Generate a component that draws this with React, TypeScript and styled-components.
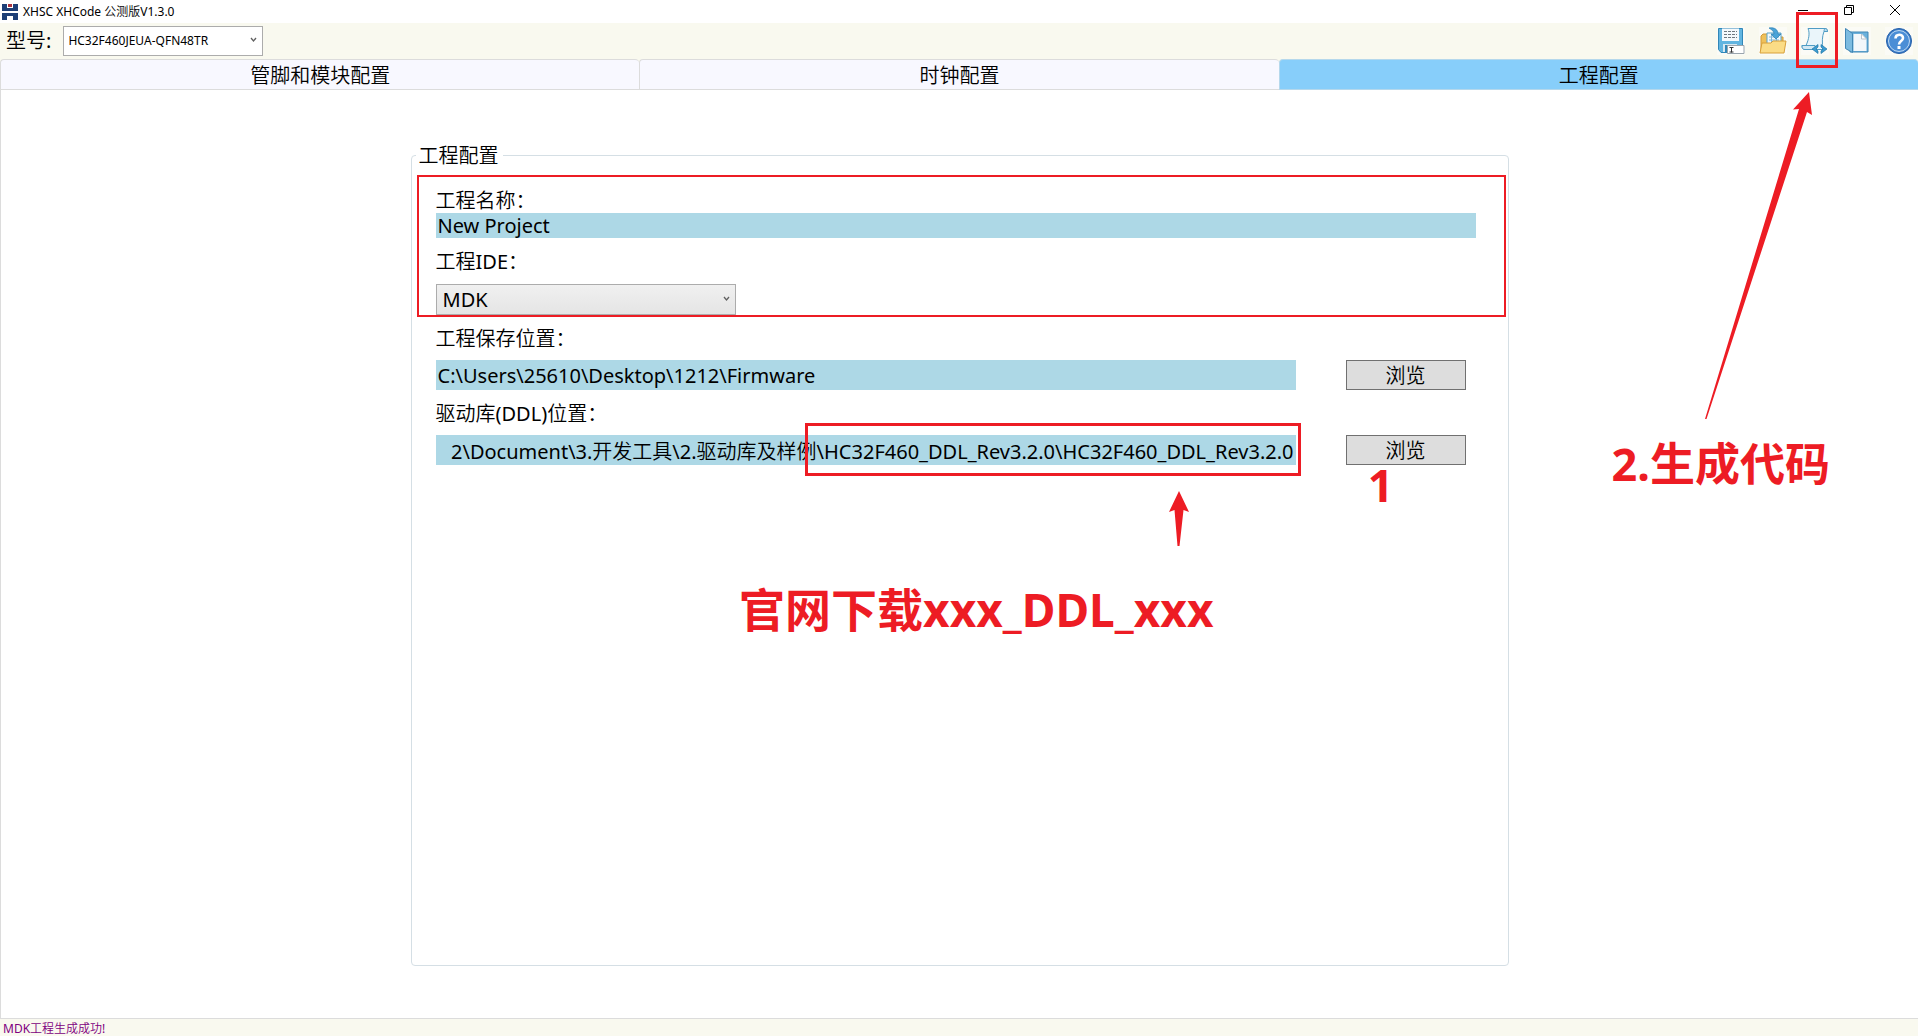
import React, { useEffect, useRef } from "react";
import styled, { createGlobalStyle } from "styled-components";

const RED = "#ed1c24";

const GlobalStyle = createGlobalStyle`
  * { box-sizing: border-box; }
  body {
    margin: 0;
    background: #fff;
    color: #000;
    font-family: "Noto Sans", "Noto Sans CJK SC DemiLight", "Noto Sans CJK SC", sans-serif;
    font-size: 20px;
  }
  button, input, select { font: inherit; color: inherit; margin: 0; }
`;

const Page = styled.div`
  position: relative;
  display: flex;
  flex-direction: column;
  min-height: 100vh;
  overflow: hidden;
`;

const TitleBar = styled.header`
  display: flex;
  align-items: center;
  justify-content: space-between;
  height: 23px;
  padding: 0 18px 3px 2px;
`;

const AppTitle = styled.h1`
  display: flex;
  align-items: center;
  gap: 5px;
  margin: 0;
  padding-top: 3px;
  font-size: 12px;
  font-weight: 400;
  line-height: 20px;
`;

const WindowControls = styled.div`
  display: flex;
  gap: 36px;
`;

const PlainButton = styled.button`
  display: flex;
  padding: 0;
  border: 0;
  background: none;
`;

const Toolbar = styled.div`
  display: flex;
  align-items: center;
  justify-content: space-between;
  height: 36px;
  padding: 0 5px 0 6px;
  background: #f9f9ef;
`;

const ModelField = styled.label`
  display: flex;
  align-items: center;
  gap: 12px;
  line-height: 28px;
`;

const Combo = styled.span<{ $width: number }>`
  position: relative;
  display: block;
  width: ${(p) => p.$width}px;
`;

const ComboSelect = styled.select<{ $plain?: boolean }>`
  display: block;
  appearance: none;
  width: 100%;
  height: ${(p) => (p.$plain ? 30 : 31)}px;
  padding: 0 20px 0 ${(p) => (p.$plain ? 4 : 6)}px;
  border: 1px solid #acacac;
  border-radius: 0;
  background: ${(p) => (p.$plain ? "#fff" : "linear-gradient(#f0f0f0, #e5e5e5)")};
  font-size: ${(p) => (p.$plain ? 12 : 20)}px;
`;

const ComboArrow = styled.svg`
  position: absolute;
  top: 50%;
  right: 6px;
  margin-top: -4px;
  pointer-events: none;
`;

const ToolButtons = styled.div`
  display: flex;
  gap: 14px;
`;

const ToolButton = styled(PlainButton)`
  position: relative;
  background: #fbfbf6;
`;

const ToolHighlight = styled.span`
  position: absolute;
  inset: -15px -9px -13px -5px;
  border: 3px solid ${RED};
  pointer-events: none;
`;

const Tabs = styled.nav`
  display: grid;
  grid-template-columns: repeat(3, 1fr);
  background: #f9f9ef;
`;

const Tab = styled.button<{ $active?: boolean }>`
  height: 31px;
  padding: 2px 0 0;
  border: 1px solid ${(p) => (p.$active ? "#b5d8ec" : "#dcdcdc")};
  border-right-width: 0;
  border-radius: 4px 4px 0 0;
  background: ${(p) => (p.$active ? "#87cefa" : "#f8f8ff")};
  line-height: 26px;
`;

const Workspace = styled.main`
  flex: 1;
  padding: 51px 20px 52px;
  border-left: 1px solid #dcdcdc;
  display: flex;
  justify-content: center;
`;

const Group = styled.fieldset`
  position: relative;
  width: 100%;
  max-width: 1098px;
  min-width: 0;
  margin: 0;
  padding: 20px 32px 0 24px;
  border: 1px solid #d5dfe5;
  border-radius: 4px;
`;

const GroupTitle = styled.legend`
  margin-left: -20px;
  padding: 2px 4px 0 3px;
  line-height: 26px;
`;

const FieldLabel = styled.label`
  display: block;
  line-height: 24px;
`;

const Field = styled.div<{ $gap: number; $top?: number }>`
  display: grid;
  gap: ${(p) => p.$gap}px;
  margin-top: ${(p) => p.$top ?? 0}px;
`;

const PathRow = styled.div`
  display: flex;
  gap: 50px;
  padding-right: 10px;
`;

const TextBox = styled.input<{ $height: number }>`
  flex: 1;
  min-width: 0;
  width: 100%;
  height: ${(p) => p.$height}px;
  padding: 0 2px;
  border: 0;
  border-radius: 0;
  background: #add8e6;
`;

const EndTextBox = styled(TextBox)`
  text-align: right;
`;

const BrowseButton = styled.button`
  width: 120px;
  height: 30px;
  padding: 2px 0 0;
  border: 1px solid #707070;
  background: #ddd;
  line-height: 26px;
`;

const PathCell = styled.div`
  position: relative;
  display: flex;
  flex: 1;
  min-width: 0;
`;

const ProjectHighlight = styled.div`
  position: absolute;
  top: 6px;
  left: 5px;
  right: 2px;
  height: 142px;
  border: 2px solid ${RED};
  pointer-events: none;
`;

const LibraryHighlight = styled.div`
  position: absolute;
  top: -12px;
  right: -5px;
  width: 496px;
  height: 53px;
  border: 3px solid ${RED};
  pointer-events: none;
`;

const Note = styled.p<{ $top: number; $right: number; $size?: number }>`
  position: absolute;
  top: ${(p) => p.$top}px;
  right: ${(p) => p.$right}px;
  margin: 0;
  color: ${RED};
  font-family: "Noto Sans", "Noto Sans CJK SC", sans-serif;
  font-size: ${(p) => p.$size ?? 45}px;
  font-weight: 700;
  line-height: 60px;
  white-space: nowrap;
`;

const Arrow = styled.svg<{ $top: number; $right: number }>`
  position: absolute;
  top: ${(p) => p.$top}px;
  right: ${(p) => p.$right}px;
  fill: ${RED};
  pointer-events: none;
`;

const StatusBar = styled.footer`
  height: 18px;
  padding-left: 3px;
  border-top: 1px solid #dcdcdc;
  background: #f9f9ef;
  color: #800080;
  font-size: 12px;
  line-height: 20px;
`;

const Logo = () => (
  <svg width="16" height="16" viewBox="0 0 16 16" aria-hidden="true">
    <path d="M0 0h5v4h6V0h5v7H0z" fill="#1d3f77" />
    <path d="M6 0h4v3H6z" fill="#a8323e" />
    <path d="M0 9h16v7h-5v-4H5v4H0z" fill="#1d3f77" />
  </svg>
);

const Chevron = () => (
  <ComboArrow width="7" height="6" viewBox="0 0 7 6" fill="none" aria-hidden="true">
    <path d="M1 1l2.5 3L6 1" stroke="#606060" strokeWidth="1.3" />
  </ComboArrow>
);

const SaveIcon = () => (
  <svg width="28" height="28" viewBox="0 0 28 28" aria-hidden="true">
    <path d="M1.500 1.500h24v24H4l-2.500-3z" fill="#62b5e0" stroke="#3187b8" />
    <path d="M5 1.500h17V14H5z" fill="#f4f9fc" />
    <path d="M7 4.500h13M7 7.500h13M7 10.500h13" stroke="#6d7880" strokeDasharray="3 1" />
    <path d="M6 17h14v8H6z" fill="#d7e8f1" />
    <path d="M8 18h3v7H8z" fill="#3187b8" />
    <path d="M10.500 18.500H27v8H10.500z" fill="#fff" stroke="#9aa5ad" />
    <path d="M12.500 20.500h4M14.500 20.500v5M12.500 25h4" stroke="#333" />
  </svg>
);

const OpenIcon = () => (
  <svg width="28" height="28" viewBox="0 0 28 28" aria-hidden="true">
    <path d="M2 25V9l2-2h5l2 3h13v15z" fill="#efc05a" stroke="#d29a38" />
    <path d="M8 6h14v13H8z" fill="#f2f9fd" stroke="#5aa4cc" />
    <path d="M10 10h10M10 13h10M12.500 8v9M17.500 8v9" stroke="#7fb6d8" />
    <path d="M10 1c6-1 9 2 9 6h3l-5 5-5-5h3c0-3-2-4-5-6z" fill="#4aa3d8" stroke="#2b7fb3" strokeWidth=".7" />
    <path d="M1 26l2-10h9l2-2h13l-2 12z" fill="#fbdc86" stroke="#d8a03a" />
  </svg>
);

const GenerateIcon = () => (
  <svg width="28" height="28" viewBox="0 0 28 28" aria-hidden="true">
    <path d="M7 1.500h17c1.500 0 2.500 1 2.500 3H23c-2 5-2 11-1 18H4c-2 0-3-1-3-4h4C8 12 9 6 7 1.500z" fill="#eaf5fa" stroke="#4f9cc4" />
    <path d="M23 4.500c0-1.500.5-3 1.500-3s2 1 2 3z" fill="#b9dcee" stroke="#4f9cc4" />
    <path d="M1 18.500h13c0 3 1 4 3 4H4c-2 0-3-1-3-4z" fill="#d3e9f4" stroke="#4f9cc4" />
    <path d="M17 17.500L11 22l6 4.500V24l-2-2 2-2zM20 17.500l6 4.500-6 4.500V24l2-2-2-2z" fill="#3a9bd0" stroke="#2478a8" strokeWidth=".7" />
  </svg>
);

const BookIcon = () => (
  <svg width="28" height="28" viewBox="0 0 28 28" aria-hidden="true">
    <path d="M7 5h18v20H7z" fill="#6bb1dc" stroke="#4187b5" />
    <path d="M10.500 7H19l4.500 5v12h-13z" fill="#f3f7fa" />
    <path d="M18.500 7v5h5z" fill="#fff" stroke="#aab6c0" strokeWidth=".8" />
    <path d="M2.500 1.500l7 5v19l-7-4z" fill="#7cbbe0" stroke="#4187b5" />
  </svg>
);

const HelpIcon = () => (
  <svg width="28" height="28" viewBox="0 0 28 28" aria-hidden="true">
    <circle cx="14" cy="14" r="12.500" fill="#3a7cc9" stroke="#2560a8" />
    <circle cx="14" cy="14" r="10.500" fill="#4b8ed6" stroke="#bfdaf3" />
    <path d="M10.500 11.500c0-5 7.500-5 7.500-.5 0 3-4 3-4 6.500" fill="none" stroke="#fff" strokeWidth="2.600" />
    <path d="M12.500 19h3v3h-3z" fill="#fff" />
  </svg>
);

const LIBRARY_PATH =
  "2\\Document\\3.开发工具\\2.驱动库及样例\\HC32F460_DDL_Rev3.2.0\\HC32F460_DDL_Rev3.2.0";

export default function App() {
  const libraryRef = useRef<HTMLInputElement>(null);

  // Keep the end of a long path in view.
  useEffect(() => {
    const box = libraryRef.current;
    if (box) box.scrollLeft = box.scrollWidth;
  }, []);

  return (
    <Page>
      <GlobalStyle />
      <TitleBar>
        <AppTitle>
          <Logo />
          XHSC XHCode 公测版V1.3.0
        </AppTitle>
        <WindowControls>
          <PlainButton aria-label="最小化">
            <svg width="10" height="10" stroke="#000" fill="none"><path d="M0 5.500h10" /></svg>
          </PlainButton>
          <PlainButton aria-label="还原">
            <svg width="10" height="10" stroke="#000" fill="none"><path d="M.5 2.500h7v7h-7zM2.500 2.500v-2h7v7h-2" /></svg>
          </PlainButton>
          <PlainButton aria-label="关闭">
            <svg width="10" height="10" stroke="#000" fill="none"><path d="M0 0l10 10M10 0L0 10" /></svg>
          </PlainButton>
        </WindowControls>
      </TitleBar>

      <Toolbar>
        <ModelField>
          型号:
          <Combo $width={200}>
            <ComboSelect $plain defaultValue="HC32F460JEUA-QFN48TR">
              <option>HC32F460JEUA-QFN48TR</option>
            </ComboSelect>
            <Chevron />
          </Combo>
        </ModelField>
        <ToolButtons>
          <ToolButton aria-label="保存"><SaveIcon /></ToolButton>
          <ToolButton aria-label="打开"><OpenIcon /></ToolButton>
          <ToolButton aria-label="生成代码">
            <GenerateIcon />
            <ToolHighlight />
          </ToolButton>
          <ToolButton aria-label="手册"><BookIcon /></ToolButton>
          <ToolButton aria-label="帮助"><HelpIcon /></ToolButton>
        </ToolButtons>
      </Toolbar>

      <Tabs>
        <Tab>管脚和模块配置</Tab>
        <Tab>时钟配置</Tab>
        <Tab $active>工程配置</Tab>
      </Tabs>

      <Workspace>
        <Group>
          <GroupTitle>工程配置</GroupTitle>
          <ProjectHighlight />
          <Field $gap={0}>
            <FieldLabel htmlFor="project-name">工程名称：</FieldLabel>
            <TextBox id="project-name" $height={25} defaultValue="New Project" />
          </Field>
          <Field $gap={10} $top={12}>
            <FieldLabel htmlFor="project-ide">工程IDE：</FieldLabel>
            <Combo $width={300}>
              <ComboSelect id="project-ide" defaultValue="MDK">
                <option>MDK</option>
              </ComboSelect>
              <Chevron />
            </Combo>
          </Field>
          <Field $gap={9} $top={12}>
            <FieldLabel htmlFor="save-path">工程保存位置：</FieldLabel>
            <PathRow>
              <PathCell>
                <TextBox id="save-path" $height={30} defaultValue="C:\Users\25610\Desktop\1212\Firmware" />
              </PathCell>
              <BrowseButton>浏览</BrowseButton>
            </PathRow>
          </Field>
          <Field $gap={9} $top={12}>
            <FieldLabel htmlFor="library-path">驱动库(DDL)位置：</FieldLabel>
            <PathRow>
              <PathCell>
                <EndTextBox id="library-path" ref={libraryRef} $height={30} defaultValue={LIBRARY_PATH} />
                <LibraryHighlight />
              </PathCell>
              <BrowseButton>浏览</BrowseButton>
            </PathRow>
          </Field>
          <Note $top={286} $right={114}>1</Note>
          <Arrow $top={322} $right={319} width="20" height="55" viewBox="0 0 20 55">
            <path d="M10 0l10 21-5.500-2L10.500 55h-2L5.500 19 0 21z" />
          </Arrow>
          <Note $top={410} $right={294} $size={46}>官网下载xxx_DDL_xxx</Note>
        </Group>
      </Workspace>

      <StatusBar>MDK工程生成成功!</StatusBar>

      <Arrow $top={92} $right={106} width="108" height="327" viewBox="0 0 108 327">
        <path d="M105 0l3 23-5-3L2.500 327H1L95 17l-6 .5z" />
      </Arrow>
      <Note $top={434} $right={88}>2.生成代码</Note>
    </Page>
  );
}
